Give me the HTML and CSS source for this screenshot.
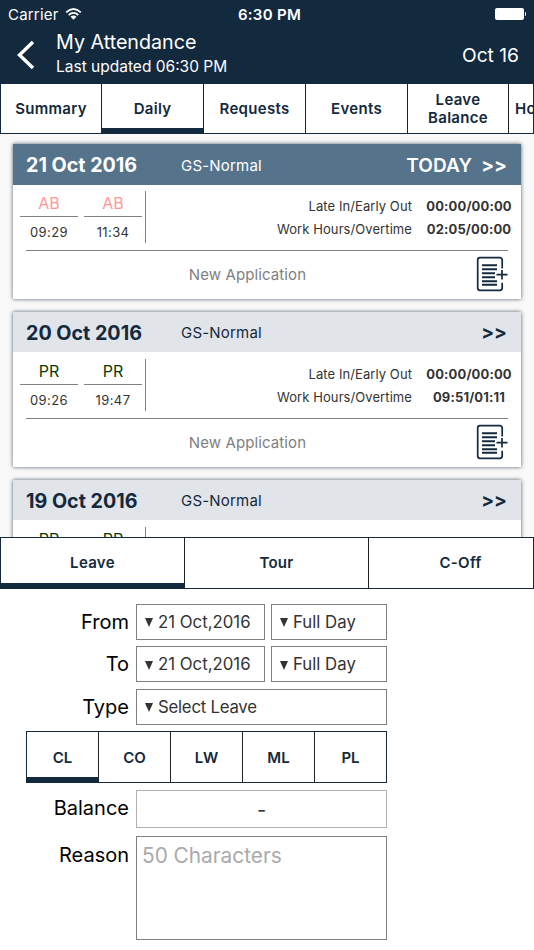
FILE: index.html
```html
<!DOCTYPE html>
<html lang="en" dir="ltr">
<head>
	<title>My Attendance</title>
	<meta charset="utf-8">
	<meta name="viewport" content="width=device-width,initial-scale=1">
	<link rel="stylesheet" href="styles.css">
</head>
<body>
	<svg class="defs" width="0" height="0">
		<symbol id="new-app" viewBox="0 0 32 36">
			<path d="M26.2 12.500V4a2.300 2.300 0 0 0-2.300-2.300H4A2.300 2.300 0 0 0 1.700 4v28A2.300 2.300 0 0 0 4 34.300h19.900a2.300 2.300 0 0 0 2.300-2.300v-5.200" fill="none" stroke="#13293d" stroke-width="1.700"/>
			<path d="M6 9.300h15M6 13.300h15M6 17.300h13M6 21.300h13M6 25.300h15M6 28.800h15" stroke="#13293d" stroke-width="2"/>
			<path d="M20.500 18.700h11M26 14v9.500" stroke="#13293d" stroke-width="1.700"/>
		</symbol>
	</svg>
	<header>
		<div class="status">
			<span class="carrier">Carrier
				<svg width="17" height="12" viewBox="0 0 17 12">
					<path d="M1.200 4.300Q8.500-2.300 15.800 4.300M3.700 7Q8.500 2.800 13.300 7" fill="none" stroke="#fff" stroke-width="1.800"/>
					<path d="M5.500 8.800Q8.500 6.400 11.500 8.800L8.500 11.800Z" fill="#fff"/>
				</svg>
			</span>
			<span class="clock">6:30 PM</span>
			<span class="battery"><i></i><b></b></span>
		</div>
		<div class="bar">
			<svg class="back" width="20" height="30" viewBox="0 0 20 30"><path d="M17 2L3.500 15L17 28" fill="none" stroke="#fff" stroke-width="3.400"/></svg>
			<div class="heading">
				<h1>My Attendance</h1>
				<p>Last updated 06:30 PM</p>
			</div>
			<span class="month">Oct 16</span>
		</div>
	</header>
	<nav class="tabs main">
		<a>Summary</a>
		<a class="active">Daily</a>
		<a>Requests</a>
		<a>Events</a>
		<a>Leave Balance</a>
		<a class="cut">Holidays</a>
	</nav>
	<main>
		<article class="card today">
			<div class="card-head"><h2>21 Oct 2016</h2><span class="shift">GS-Normal</span><span class="more"><em>TODAY</em>&gt;&gt;</span></div>
			<div class="detail">
				<div class="punch absent"><b>AB</b><span>09:29</span></div>
				<div class="punch absent"><b>AB</b><span>11:34</span></div>
				<div class="hours">
					<span>Late In/Early Out</span><strong>00:00/00:00</strong>
					<span>Work Hours/Overtime</span><strong>02:05/00:00</strong>
				</div>
			</div>
			<div class="apply"><span>New Application</span><svg width="32" height="36"><use href="#new-app"/></svg></div>
		</article>
		<article class="card">
			<div class="card-head"><h2>20 Oct 2016</h2><span class="shift">GS-Normal</span><span class="more">&gt;&gt;</span></div>
			<div class="detail">
				<div class="punch"><b>PR</b><span>09:26</span></div>
				<div class="punch"><b>PR</b><span>19:47</span></div>
				<div class="hours">
					<span>Late In/Early Out</span><strong>00:00/00:00</strong>
					<span>Work Hours/Overtime</span><strong>09:51/01:11</strong>
				</div>
			</div>
			<div class="apply"><span>New Application</span><svg width="32" height="36"><use href="#new-app"/></svg></div>
		</article>
		<article class="card">
			<div class="card-head"><h2>19 Oct 2016</h2><span class="shift">GS-Normal</span><span class="more">&gt;&gt;</span></div>
			<div class="detail">
				<div class="punch"><b>PR</b></div>
				<div class="punch"><b>PR</b></div>
				<div class="hours">
					<span>Late In/Early Out</span><strong>00:04/00:00</strong>
				</div>
			</div>
		</article>
	</main>
	<nav class="tabs kind">
		<a class="active">Leave</a>
		<a>Tour</a>
		<a>C-Off</a>
	</nav>
	<form>
		<div class="row">
			<label>From</label>
			<div class="select date"><i></i>21 Oct,2016</div>
			<div class="select day"><i></i>Full Day</div>
		</div>
		<div class="row">
			<label>To</label>
			<div class="select date"><i></i>21 Oct,2016</div>
			<div class="select day"><i></i>Full Day</div>
		</div>
		<div class="row">
			<label>Type</label>
			<div class="select type"><i></i>Select Leave</div>
		</div>
		<nav class="tabs leave">
			<a class="active">CL</a>
			<a>CO</a>
			<a>LW</a>
			<a>ML</a>
			<a>PL</a>
		</nav>
		<div class="row">
			<label>Balance</label>
			<div class="balance">-</div>
		</div>
		<div class="row reason">
			<label>Reason</label>
			<textarea placeholder="50 Characters"></textarea>
		</div>
	</form>
</body>
</html>
```
FILE: styles.css
```css
* {
	box-sizing: border-box;
}

body {
	background: #fff;
	color: #13293d;
	font: 16px Inter, "Liberation Sans", sans-serif;
	height: 950px;
	margin: 0;
	overflow: hidden;
	width: 534px;
}

h1, h2, p {
	font-weight: normal;
	margin: 0;
}

.defs {
	display: block;
}

header {
	background: #13293d;
	color: #fff;
	height: 83px;
}

.status {
	align-items: center;
	display: grid;
	font-size: 15px;
	grid-template-columns: 1fr auto 1fr;
	height: 28px;
	padding: 0 8px;
}

.carrier {
	align-items: center;
	display: flex;
	gap: 6px;
	letter-spacing: .2px;
}

.clock {
	font-weight: 600;
	letter-spacing: .3px;
	padding-left: 5px;
}

.battery {
	align-items: center;
	display: flex;
	gap: 1px;
	justify-content: flex-end;
	padding-bottom: 1px;
}

.battery i {
	background: #fff;
	border-radius: 2px;
	height: 12px;
	width: 29px;
}

.battery b {
	background: #fff;
	border-radius: 0 2px 2px 0;
	height: 4px;
	width: 1px;
}

.bar {
	align-items: center;
	display: flex;
	height: 54px;
	padding: 0 15px 0 16px;
}

.heading {
	flex: 1;
	padding: 0 0 3px 20px;
}

.heading h1 {
	font-size: 19.7px;
	line-height: 26px;
}

.heading p {
	font-size: 15.5px;
	line-height: 24px;
}

.month {
	font-size: 19.2px;
}

.tabs {
	border: 1px solid #13293d;
	color: #13293d;
	display: flex;
	font-size: 15px;
	font-weight: 600;
	overflow: hidden;
}

.tabs a {
	align-items: center;
	border-right: 1px solid #222;
	display: flex;
	flex: none;
	justify-content: center;
	line-height: 18px;
	text-align: center;
}

.tabs .active {
	border-bottom: 5px solid #13293d;
	padding-top: 5px;
}

.main {
	height: 51px;
}

.main a {
	letter-spacing: .3px;
	padding-left: 10px;
	padding-right: 10px;
	width: 102px;
}

.main a:first-child, .main a:nth-child(5) {
	width: 101px;
}

.main .cut {
	justify-content: flex-start;
	padding-left: 6px;
}

main {
	background: #f9f9f9;
	height: 403px;
	overflow: hidden;
	padding: 10px 13px 0;
}

.card {
	background: #fff;
	box-shadow: 0 0 4px #4c5c6a;
	height: 155px;
	margin-bottom: 13px;
}

.card-head {
	align-items: center;
	background: #e1e4e9;
	display: flex;
	height: 40px;
	padding: 1px 14px 0 13px;
}

.today .card-head {
	background: #56738c;
	color: #fff;
	height: 41px;
	margin-bottom: -1px;
}

.card-head h2 {
	font-size: 19.7px;
	font-weight: 700;
	width: 155px;
}

.shift {
	flex: 1;
	font-size: 15px;
	letter-spacing: .2px;
}

.more {
	font-size: 19px;
	font-weight: 700;
}

.more em {
	font-style: normal;
	font-weight: 600;
	letter-spacing: .1px;
	margin-right: 9px;
}

.detail {
	display: flex;
	height: 66px;
	padding: 7px 9px 0 7px;
}

.punch {
	color: #063c06;
	height: 52px;
	margin-right: 6px;
	text-align: center;
	width: 58px;
}

.punch b {
	border-bottom: 1px solid #808080;
	display: block;
	font-size: 16px;
	font-weight: normal;
	height: 26px;
	line-height: 24px;
}

.absent b {
	color: #f99;
}

.punch span {
	color: #333;
	display: block;
	font-size: 13px;
	letter-spacing: .4px;
	line-height: 30px;
}

.hours {
	align-content: start;
	border-left: 1px solid #808080;
	color: #333;
	display: grid;
	flex: 1;
	font-size: 13px;
	grid-auto-rows: 23px;
	grid-template-columns: 1fr 100px;
	height: 52px;
	letter-spacing: .08px;
	line-height: 30px;
	margin-left: -3px;
	text-align: right;
}

.hours strong {
	font-weight: 700;
	letter-spacing: .15px;
	margin: 0 0 0 14px;
	text-align: center;
	white-space: nowrap;
}

.apply {
	align-items: center;
	border-top: 1px solid #808080;
	color: #808080;
	display: flex;
	font-size: 15px;
	height: 47px;
	letter-spacing: .1px;
	margin: 0 13px;
}

.apply span {
	flex: 1;
	padding-right: 7px;
	text-align: center;
}

.kind {
	height: 51.6px;
}

.kind a {
	letter-spacing: .3px;
	width: 184px;
}

form {
	color: #333;
	padding: 15px 0 0 26px;
	width: 387px;
}

.row {
	display: flex;
	height: 36px;
	margin-bottom: 6.6px;
}

.row label {
	color: #000;
	font-size: 20px;
	line-height: 37px;
	margin-right: 7px;
	text-align: right;
	width: 103px;
}

.select {
	align-items: center;
	border: 1px solid #808080;
	display: flex;
	font-size: 16.8px;
	padding-left: 8px;
}

.select i {
	border: 4px solid transparent;
	border-bottom: 0;
	border-top: 9px solid #333;
	margin: 2px 5px 0 0;
}

.date {
	margin-right: 6px;
	width: 129px;
}

.day {
	width: 116px;
}

.type {
	flex: 1;
	letter-spacing: -.25px;
}

.leave {
	height: 51.6px;
	margin-bottom: 6.6px;
}

.leave a {
	flex: 1 1 0;
	padding-top: 1px;
}

.leave .active {
	padding-top: 6px;
}

.leave a:last-child {
	border-right: 0;
}

.balance {
	border: 1px solid #b0b0b0;
	flex: 1;
	font-size: 20px;
	height: 38px;
	line-height: 36px;
	text-align: center;
}

.balance, .reason label {
	padding-top: 1px;
}

.reason {
	margin-top: 10.4px;
}

textarea {
	border: 1px solid #808080;
	border-radius: 0;
	flex: 1;
	font: 20.8px Inter, sans-serif;
	height: 104px;
	outline: 0;
	padding: 6px 5px;
	resize: none;
}

textarea::placeholder {
	color: #aaa;
}
```
